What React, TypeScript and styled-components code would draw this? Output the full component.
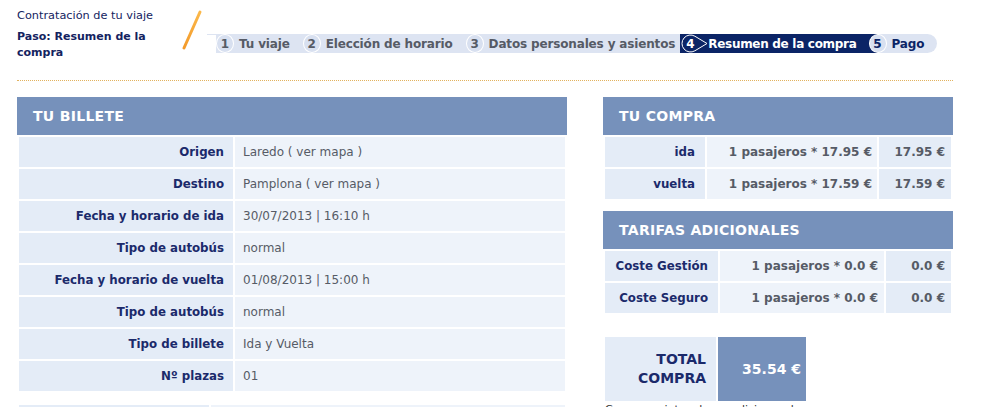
import React from "react";
import styled, { createGlobalStyle } from "styled-components";

const GlobalStyle = createGlobalStyle`
  html, body { margin: 0; padding: 0; background: #ffffff; }
  body { font-family: "DejaVu Sans", Verdana, sans-serif; }
`;

const NAVY = "#1b2a6b";
const GREY = "#565b66";
const HEAD_BLUE = "#7691bb";
const LABEL_BG = "#e4ecf7";
const VALUE_BG = "#eef3fa";

const Page = styled.div`
  width: 936px;
  padding-left: 17px;
`;

const Header = styled.header`
  display: flex;
  align-items: flex-start;
  height: 81px;
  box-sizing: border-box;
  border-bottom: 1px dotted #e2b25e;
`;

const TitleBlock = styled.div`
  width: 164px;
  padding-top: 9px;
  color: #14235f;
`;

const Title = styled.div`
  font-size: 11.3px;
  line-height: 14px;
`;

const StepName = styled.div`
  margin-top: 6px;
  font-size: 11px;
  font-weight: bold;
  line-height: 16px;
  width: 140px;
`;

const Slash = styled.svg`
  flex: none;
  display: block;
  margin-top: 5px;
`;

const StepsBar = styled.ol`
  list-style: none;
  margin: 34px 0 0 13px;
  padding: 0;
  height: 19px;
  display: flex;
  align-items: center;
  background: #dde4f2;
  border-radius: 0 10px 10px 0;
  position: relative;
  &::before {
    content: "";
    position: absolute;
    left: -9px;
    top: 0;
    width: 9px;
    height: 1px;
    background: #dde4f2;
  }
`;

const Step = styled.li<{ $active?: boolean; $next?: boolean }>`
  display: flex;
  align-items: center;
  height: 19px;
  padding-right: ${(p) => (p.$active ? "21px" : "13px")};
  margin-left: ${(p) => (p.$active ? "-8px" : p.$next ? "-9px" : "0")};
  padding-left: ${(p) => (p.$active ? "1px" : "0")};
  background: ${(p) => (p.$active ? "#0b2466" : "transparent")};
  position: relative;
  z-index: ${(p) => (p.$next ? 1 : 0)};
`;

const Circle = styled.span<{ $navy?: boolean }>`
  width: 18px;
  height: 19px;
  box-sizing: border-box;
  border: 1px solid #ffffff;
  border-radius: 50%;
  background: #d8e0f0;
  display: flex;
  align-items: center;
  justify-content: center;
  font-size: 12px;
  font-weight: bold;
  color: ${(p) => (p.$navy ? "#0b2466" : GREY)};
`;

const StepText = styled.span<{ $tone: "grey" | "white" | "navy" }>`
  margin-left: ${(p) => (p.$tone === "white" ? "0" : "5px")};
  font-size: 12px;
  font-weight: bold;
  letter-spacing: ${(p) => (p.$tone === "white" ? "-0.3px" : "-0.15px")};
  color: ${(p) => (p.$tone === "white" ? "#ffffff" : p.$tone === "navy" ? "#0b2466" : GREY)};
  white-space: nowrap;
`;

const Content = styled.main`
  display: flex;
  align-items: flex-start;
  gap: 36px;
  margin-top: 16px;
`;

const Column = styled.section<{ $w: number }>`
  width: ${(p) => p.$w}px;
  flex: none;
`;

const Block = styled.div<{ $mt?: number }>`
  margin-top: ${(p) => p.$mt ?? 0}px;
`;

const PanelHeader = styled.h2`
  margin: 0;
  height: 38px;
  display: flex;
  align-items: center;
  padding-left: 16px;
  background: ${HEAD_BLUE};
  color: #ffffff;
  font-size: 14px;
  font-weight: bold;
  letter-spacing: 0.3px;
`;

const Grid = styled.div<{ $cols: string }>`
  display: grid;
  grid-template-columns: ${(p) => p.$cols};
  gap: 2px;
  padding: 2px;
`;

type CellKind = "label" | "value" | "calc" | "amount";

const Cell = styled.div<{ $kind: CellKind; $pr?: number }>`
  height: 30px;
  display: flex;
  align-items: center;
  box-sizing: border-box;
  white-space: nowrap;
  font-size: ${(p) => (p.$kind === "label" ? "11.8px" : "12px")};
  justify-content: ${(p) => (p.$kind === "value" ? "flex-start" : "flex-end")};
  padding: ${(p) => (p.$kind === "value" ? "0 0 0 8px" : `0 ${p.$pr ?? 9}px 0 0`)};
  background: ${(p) => (p.$kind === "label" || p.$kind === "amount" ? LABEL_BG : VALUE_BG)};
  color: ${(p) => (p.$kind === "label" ? NAVY : GREY)};
  font-weight: ${(p) => (p.$kind === "value" ? "normal" : "bold")};
`;

const TotalGrid = styled.div`
  display: grid;
  grid-template-columns: 111px 88px;
  gap: 2px;
  padding: 0 2px;
  height: 64px;
`;

const TotalLabel = styled.div`
  background: ${LABEL_BG};
  color: ${NAVY};
  font-size: 14px;
  font-weight: bold;
  line-height: 19px;
  text-align: right;
  padding-right: 10px;
  display: flex;
  align-items: center;
  justify-content: flex-end;
`;

const TotalValue = styled.div`
  background: ${HEAD_BLUE};
  color: #ffffff;
  font-size: 14px;
  font-weight: bold;
  display: flex;
  align-items: center;
  justify-content: flex-end;
  padding-right: 5px;
`;

const Note = styled.p`
  margin: 2px 0 0 2px;
  font-size: 11px;
  line-height: 13px;
  color: #333333;
`;

const ActiveBadge = () => (
  <svg width="27" height="19" viewBox="0 0 27 19" style={{ display: "block", flex: "none" }}>
    <path
      d="M 13.88 2.21 L 26 9.5 L 13.88 16.79 A 8.5 8.5 0 1 1 13.88 2.21 Z"
      fill="#0b2466"
      stroke="#ffffff"
      strokeWidth="1"
    />
    <text
      x="9.5"
      y="13.8"
      textAnchor="middle"
      fill="#ffffff"
      fontSize="12"
      fontWeight="bold"
      fontFamily="DejaVu Sans, Verdana, sans-serif"
    >
      4
    </text>
  </svg>
);

const billete: [string, string][] = [
  ["Origen", "Laredo ( ver mapa )"],
  ["Destino", "Pamplona ( ver mapa )"],
  ["Fecha y horario de ida", "30/07/2013 | 16:10 h"],
  ["Tipo de autobús", "normal"],
  ["Fecha y horario de vuelta", "01/08/2013 | 15:00 h"],
  ["Tipo de autobús", "normal"],
  ["Tipo de billete", "Ida y Vuelta"],
  ["Nº plazas", "01"],
];

const compra: [string, string, string][] = [
  ["ida", "1 pasajeros * 17.95 €", "17.95 €"],
  ["vuelta", "1 pasajeros * 17.59 €", "17.59 €"],
];

const tarifas: [string, string, string][] = [
  ["Coste Gestión", "1 pasajeros * 0.0 €", "0.0 €"],
  ["Coste Seguro", "1 pasajeros * 0.0 €", "0.0 €"],
];

export default function App() {
  return (
    <>
      <GlobalStyle />
      <Page>
        <Header>
          <TitleBlock>
            <Title>Contratación de tu viaje</Title>
            <StepName>Paso: Resumen de la compra</StepName>
          </TitleBlock>
          <Slash width="22" height="50" viewBox="0 0 22 50">
            <defs>
              <linearGradient id="sl" x1="0" y1="0" x2="0" y2="1">
                <stop offset="0" stopColor="#fbb84a" />
                <stop offset="1" stopColor="#f39a2a" />
              </linearGradient>
            </defs>
            <line x1="19" y1="7" x2="3" y2="43" stroke="url(#sl)" strokeWidth="3" strokeLinecap="round" />
          </Slash>
          <StepsBar>
            <Step>
              <Circle>1</Circle>
              <StepText $tone="grey">Tu viaje</StepText>
            </Step>
            <Step>
              <Circle>2</Circle>
              <StepText $tone="grey">Elección de horario</StepText>
            </Step>
            <Step>
              <Circle>3</Circle>
              <StepText $tone="grey">Datos personales y asientos</StepText>
            </Step>
            <Step $active>
              <ActiveBadge />
              <StepText $tone="white">Resumen de la compra</StepText>
            </Step>
            <Step $next>
              <Circle $navy>5</Circle>
              <StepText $tone="navy">Pago</StepText>
            </Step>
          </StepsBar>
        </Header>

        <Content>
          <Column $w={550}>
            <PanelHeader>TU BILLETE</PanelHeader>
            <Grid $cols="214px 330px">
              {billete.map(([k, v], i) => (
                <React.Fragment key={i}>
                  <Cell $kind="label">{k}</Cell>
                  <Cell $kind="value">{v}</Cell>
                </React.Fragment>
              ))}
            </Grid>
            <Block $mt={10}>
              <Grid $cols="190px 354px">
                <Cell $kind="label" />
                <Cell $kind="value" />
              </Grid>
            </Block>
          </Column>

          <Column $w={350}>
            <PanelHeader>TU COMPRA</PanelHeader>
            <Grid $cols="100px 170px 72px">
              {compra.map(([a, b, c], i) => (
                <React.Fragment key={i}>
                  <Cell $kind="label" $pr={10}>{a}</Cell>
                  <Cell $kind="calc" $pr={5}>{b}</Cell>
                  <Cell $kind="amount" $pr={6}>{c}</Cell>
                </React.Fragment>
              ))}
            </Grid>

            <Block $mt={10}>
              <PanelHeader>TARIFAS ADICIONALES</PanelHeader>
              <Grid $cols="113px 164px 65px">
                {tarifas.map(([a, b, c], i) => (
                  <React.Fragment key={i}>
                    <Cell $kind="label" $pr={10}>{a}</Cell>
                    <Cell $kind="calc" $pr={6}>{b}</Cell>
                    <Cell $kind="amount" $pr={6}>{c}</Cell>
                  </React.Fragment>
                ))}
              </Grid>
            </Block>

            <Block $mt={22}>
              <TotalGrid>
                <TotalLabel>
                  TOTAL
                  <br />
                  COMPRA
                </TotalLabel>
                <TotalValue>35.54 €</TotalValue>
              </TotalGrid>
              <Note>Compra sujeta a las condiciones de uso</Note>
            </Block>
          </Column>
        </Content>
      </Page>
    </>
  );
}
